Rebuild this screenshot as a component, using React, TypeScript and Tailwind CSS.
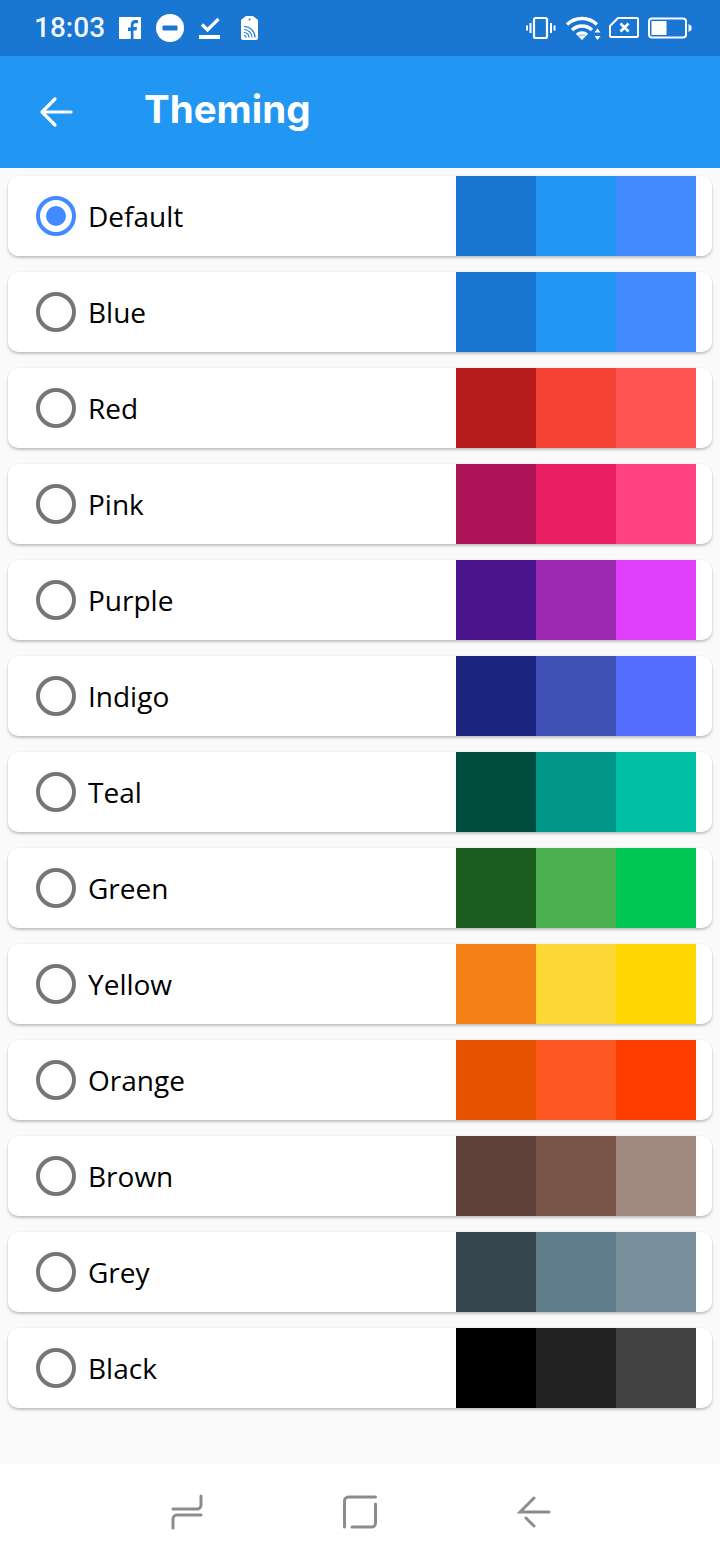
import React from 'react';

interface ThemeOption {
  name: string;
  colors: string[];
}

const themes: ThemeOption[] = [
  { name: 'Default', colors: ['#1976D2', '#2196F3', '#448AFF'] },
  { name: 'Blue', colors: ['#1976D2', '#2196F3', '#448AFF'] },
  { name: 'Red', colors: ['#B71C1C', '#F44336', '#FF5252'] },
  { name: 'Pink', colors: ['#AD1457', '#E91E63', '#FF4081'] },
  { name: 'Purple', colors: ['#4A148C', '#9C27B0', '#E040FB'] },
  { name: 'Indigo', colors: ['#1A237E', '#3F51B5', '#536DFE'] },
  { name: 'Teal', colors: ['#004D40', '#009688', '#00BFA5'] },
  { name: 'Green', colors: ['#1B5E20', '#4CAF50', '#00C853'] },
  { name: 'Yellow', colors: ['#F57F17', '#FDD835', '#FFD600'] },
  { name: 'Orange', colors: ['#E65100', '#FF5722', '#FF3D00'] },
  { name: 'Brown', colors: ['#5D4037', '#795548', '#A1887F'] },
  { name: 'Grey', colors: ['#37474F', '#607D8B', '#78909C'] },
  { name: 'Black', colors: ['#000000', '#212121', '#424242'] },
];

const StatusLeftIcons = () => (
  <div className="flex items-center">
    {/* Facebook */}
    <svg width="24" height="24" viewBox="0 0 24 24" className="ml-[13px]">
      <path fill="#fff" fillRule="evenodd" d="M1 1h22v22h-7.500v-8.500h3l.5-3.500h-3.500V9c0-1 .5-1.700 1.800-1.700H20V4.200c-.6-.1-1.500-.2-2.600-.2-2.800 0-4.600 1.700-4.600 4.600V11.500H10V15h2.800v8H1z" />
    </svg>
    {/* Do not disturb */}
    <svg width="28" height="28" viewBox="0 0 28 28" className="ml-[14px]">
      <circle cx="14" cy="14" r="14" fill="#fff" />
      <rect x="6.500" y="11.500" width="15" height="5" rx="1" fill="#1976D2" />
    </svg>
    {/* Check with underline */}
    <svg width="22" height="26" viewBox="0 0 22 26" className="ml-[15px]">
      <path d="M3 9.500l5.500 5.500L19.500 4" fill="none" stroke="#fff" strokeWidth="3.200" />
      <rect x="0" y="20" width="21" height="4" fill="#fff" />
    </svg>
    {/* NFC tag */}
    <svg width="20" height="26" viewBox="0 0 20 26" className="ml-[19px]">
      <path fill="#fff" d="M6 1h7l5 4v18a2 2 0 0 1-2 2H3a2 2 0 0 1-2-2V5z" />
      <circle cx="9.500" cy="4.500" r="1" fill="#1976D2" />
      <g fill="none" stroke="#1976D2" strokeWidth="1.100">
        <path d="M4 11.500a11 11 0 0 1 11 11" />
        <path d="M4 14.500a8 8 0 0 1 8 8" />
        <path d="M4 17.500a5 5 0 0 1 5 5" />
        <path d="M4 20.500a2 2 0 0 1 2 2" />
      </g>
    </svg>
  </div>
);

const StatusRightIcons = () => (
  <div className="flex items-center">
    {/* Vibrate */}
    <svg width="30" height="24" viewBox="0 0 30 24">
      <rect x="8" y="2" width="13" height="20" rx="1.500" fill="none" stroke="#fff" strokeWidth="2.200" />
      <path d="M4.500 7v10M1 9.500v5M25 7v10M28.500 9.500v5" stroke="#fff" strokeWidth="2" fill="none" />
    </svg>
    {/* Wifi */}
    <svg width="38" height="26" viewBox="0 0 38 26" className="ml-[9px]">
      <g fill="none" stroke="#fff" strokeWidth="3.400">
        <path d="M2 9.500C10.500 1.500 23.500 1.500 32 9.500" />
        <path d="M7 15c5.800-5.300 14.200-5.300 20 0" />
        <path d="M12 20c3-2.700 7-2.700 10 0" />
      </g>
      <path fill="#fff" d="M17 25l-3.500-3.500c2-1.600 5-1.600 7 0zM32.500 13.500l3 4h-6zM32.500 25l-3-4h6z" />
    </svg>
    {/* SIM with x */}
    <svg width="30" height="24" viewBox="0 0 30 24" className="ml-[6px]">
      <path d="M9 2h19a1 1 0 0 1 1 1v17a1 1 0 0 1-1 1H2a1 1 0 0 1-1-1V10z" fill="none" stroke="#fff" strokeWidth="2" />
      <path d="M11.500 7.500l8 8M19.500 7.500l-8 8" stroke="#fff" strokeWidth="2.600" fill="none" />
    </svg>
    {/* Battery */}
    <svg width="44" height="22" viewBox="0 0 44 22" className="ml-[9px]">
      <rect x="1" y="1.500" width="37" height="19" rx="3" fill="none" stroke="#fff" strokeWidth="2" />
      <rect x="3.500" y="4" width="15" height="14" fill="#fff" />
      <path d="M40.500 7l3 2v4l-3 2z" fill="#fff" />
    </svg>
  </div>
);

const ThemeRow = ({ theme, selected }: { theme: ThemeOption; selected: boolean }) => (
  <div className="h-20 ml-2 mr-2 flex items-center rounded-[10px] bg-white shadow-[0_2px_3px_rgba(0,0,0,0.22),0_0_2px_rgba(0,0,0,0.08)] overflow-hidden">
    <div className="ml-7 flex-1 flex items-center">
      {selected ? (
        <div className="w-10 h-10 rounded-full border-4 border-[#448AFF] flex items-center justify-center">
          <div className="w-5 h-5 rounded-full bg-[#448AFF]" />
        </div>
      ) : (
        <div className="w-10 h-10 rounded-full border-4 border-[#757575]" />
      )}
      <span className="ml-3 text-[28px] leading-none text-black font-['Open_Sans',sans-serif]">{theme.name}</span>
    </div>
    <div className="flex mr-4 h-full">
      {theme.colors.map((color, i) => (
        <div key={i} className="w-20 h-full" style={{ backgroundColor: color }} />
      ))}
    </div>
  </div>
);

export default function App() {
  return (
    <div className="w-[720px] h-[1560px] flex flex-col bg-[#fafafa] overflow-hidden">
      {/* Status bar */}
      <div className="h-14 shrink-0 bg-[#1976D2] flex items-center justify-between pl-[34px] pr-[28px]">
        <div className="flex items-center">
          <span className="text-[28px] leading-none font-medium text-white/95 font-['Roboto',sans-serif]">18:03</span>
          <StatusLeftIcons />
        </div>
        <StatusRightIcons />
      </div>

      {/* App bar */}
      <div className="h-28 shrink-0 bg-[#2196F3] flex items-center pl-[39px]">
        <svg width="34" height="32" viewBox="0 0 34 32">
          <path d="M32 16H3M16 3L3 16l13 13" fill="none" stroke="#fff" strokeWidth="3.200" strokeLinecap="round" strokeLinejoin="round" />
        </svg>
        <h1 className="ml-[71px] pb-[5px] text-[38.500px] leading-none font-bold text-white font-['Inter',sans-serif]">Theming</h1>
      </div>

      {/* Theme list */}
      <div className="flex-1 flex flex-col gap-4 pt-2">
        {themes.map((theme, i) => (
          <ThemeRow key={theme.name} theme={theme} selected={i === 0} />
        ))}
      </div>

      {/* Nav bar */}
      <div className="h-24 shrink-0 bg-white flex items-center pl-[170px]">
        <svg width="34" height="38" viewBox="0 0 34 38">
          <g fill="none" stroke="#8c8c8c" strokeWidth="3" strokeLinecap="round">
            <path d="M31 3v9a4 4 0 0 1-4 4H3" />
            <path d="M31 22H7a4 4 0 0 0-4 4v9" />
          </g>
        </svg>
        <svg width="36" height="36" viewBox="0 0 36 36" className="ml-[138px]">
          <g fill="none" stroke="#8c8c8c" strokeWidth="3" strokeLinecap="round">
            <path d="M2.500 33V7a4 4 0 0 1 4-4h27" />
            <path d="M33.500 10v19a4 4 0 0 1-4 4H10" />
          </g>
        </svg>
        <svg width="34" height="34" viewBox="0 0 34 34" className="ml-[139px]">
          <g fill="none" stroke="#8c8c8c" strokeWidth="3" strokeLinecap="round">
            <path d="M32 17H3L17 3" />
            <path d="M9 23l8 8" />
          </g>
        </svg>
      </div>
    </div>
  );
}
